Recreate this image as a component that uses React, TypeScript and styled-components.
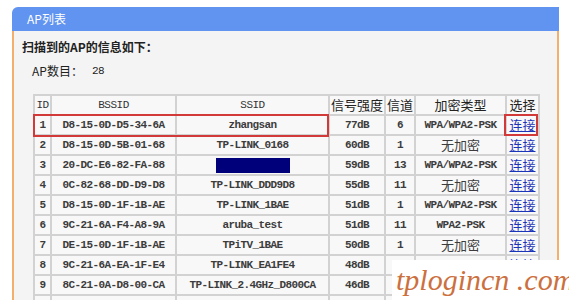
import React from 'react';
import styled, { createGlobalStyle } from 'styled-components';

const GlobalStyle = createGlobalStyle`
  html, body {
    margin: 0;
    padding: 0;
    background: #ffffff;
    overflow: hidden;
  }
`;

const Page = styled.div`
  position: relative;
  width: 569px;
  height: 300px;
  padding: 7px 0 0 12px;
  box-sizing: border-box;
  overflow: hidden;
  font-family: "Noto Sans CJK SC", "Liberation Sans", sans-serif;
`;

const Panel = styled.div`
  width: 547px;
  background: #f4f4f4;
  border-top-left-radius: 6px;
  overflow: hidden;
`;

const PanelHeader = styled.div`
  height: 24px;
  background: #6193f0;
  color: #ffffff;
  font-size: 12px;
  line-height: 24px;
  padding-left: 15px;
`;

const PanelBody = styled.div`
  border-left: 2px solid #f2b06c;
  border-right: 2px solid #f2b06c;
  padding: 8px 0 0 8px;
  height: 400px;
`;

const Intro = styled.div`
  font-size: 12px;
  font-weight: 700;
  color: #222;
  line-height: 16px;
`;

const CountLine = styled.div`
  display: flex;
  gap: 9px;
  margin: 8px 0 0 10px;
  font-size: 12px;
  color: #222;
  line-height: 16px;
`;

const CountValue = styled.span`
  font-family: "Liberation Mono", monospace;
  font-size: 11px;
  letter-spacing: -0.4px;
`;

const Table = styled.table`
  margin: 15px 0 0 11px;
  border-collapse: collapse;
  table-layout: fixed;
  width: 505px;
`;

// widths below include the cell's share of the 2px collapsed border
const HeadCell = styled.th<{ $w: number }>`
  width: ${p => p.$w - 2}px;
  height: 18px;
  padding: 0;
  border: 2px solid #d2d2d2;
  background: #f8f8f8;
  font-weight: 400;
  font-size: 13px;
  line-height: 16px;
  color: #222;
  text-align: center;
  white-space: nowrap;
  font-family: "Noto Sans CJK SC", "Liberation Sans", sans-serif;
`;

const MonoHead = styled(HeadCell)`
  font-family: "Liberation Mono", monospace;
  font-size: 11px;
  letter-spacing: -0.5px;
  color: #333;
`;

const Row = styled.tr`
  height: 18px;
`;

const Cell = styled.td<{ $cn?: boolean }>`
  padding: 0;
  height: 18px;
  border: 2px solid #d2d2d2;
  background: #f8f8f8;
  text-align: center;
  vertical-align: middle;
  white-space: nowrap;
  overflow: hidden;
  color: #3c3c3c;
  font-family: ${p => (p.$cn ? '"Noto Sans CJK SC", sans-serif' : '"Liberation Mono", monospace')};
  font-size: ${p => (p.$cn ? '13px' : '11px')};
  font-weight: ${p => (p.$cn ? 400 : 700)};
  letter-spacing: ${p => (p.$cn ? '0' : '-0.6px')};
  line-height: 16px;
`;

const Hidden = styled.span`
  display: inline-block;
  width: 74px;
  height: 15px;
  background: #00007a;
  vertical-align: middle;
`;

const Link = styled.a`
  color: #1b34b8;
  text-decoration: underline;
  font-family: "Noto Sans CJK SC", sans-serif;
  font-size: 13px;
  font-weight: 400;
  letter-spacing: 0;
  line-height: 16px;
  cursor: pointer;
`;

const RedFrame = styled.div<{ $left: number; $top: number; $w: number; $h: number }>`
  position: absolute;
  left: ${p => p.$left}px;
  top: ${p => p.$top}px;
  width: ${p => p.$w}px;
  height: ${p => p.$h}px;
  border: 2px solid #d23a3a;
  box-sizing: border-box;
  pointer-events: none;
`;

const Watermark = styled.div`
  position: absolute;
  left: 392px;
  top: 260px;
  width: 177px;
  height: 40px;
  background: #ffffff;
  color: #cc7040;
  font-family: "Liberation Serif", serif;
  font-style: italic;
  font-size: 30px;
  line-height: 40px;
  padding-left: 4px;
  box-sizing: border-box;
  white-space: nowrap;
`;

interface Ap {
  id: number;
  bssid: string;
  ssid: string | null;
  signal: string;
  channel: string;
  security: string;
}

const aps: Ap[] = [
  { id: 1, bssid: 'D8-15-0D-D5-34-6A', ssid: 'zhangsan', signal: '77dB', channel: '6', security: 'WPA/WPA2-PSK' },
  { id: 2, bssid: 'D8-15-0D-5B-01-68', ssid: 'TP-LINK_0168', signal: '60dB', channel: '1', security: '无加密' },
  { id: 3, bssid: '20-DC-E6-82-FA-88', ssid: null, signal: '59dB', channel: '13', security: 'WPA/WPA2-PSK' },
  { id: 4, bssid: '0C-82-68-DD-D9-D8', ssid: 'TP-LINK_DDD9D8', signal: '55dB', channel: '11', security: '无加密' },
  { id: 5, bssid: 'D8-15-0D-1F-1B-AE', ssid: 'TP-LINK_1BAE', signal: '51dB', channel: '1', security: 'WPA/WPA2-PSK' },
  { id: 6, bssid: '9C-21-6A-F4-A8-9A', ssid: 'aruba_test', signal: '51dB', channel: '11', security: 'WPA2-PSK' },
  { id: 7, bssid: 'DE-15-0D-1F-1B-AE', ssid: 'TPiTV_1BAE', signal: '50dB', channel: '1', security: '无加密' },
  { id: 8, bssid: '9C-21-6A-EA-1F-E4', ssid: 'TP-LINK_EA1FE4', signal: '48dB', channel: '1', security: 'WPA/WPA2-PSK' },
  { id: 9, bssid: '8C-21-0A-D8-00-CA', ssid: 'TP-LINK_2.4GHz_D800CA', signal: '46dB', channel: '6', security: 'WPA/WPA2-PSK' },
  { id: 10, bssid: '24-21-FB-18-22-18', ssid: 'Smart_100218', signal: '43dB', channel: '1', security: 'WPA/WPA2-PSK' },
];

const App = () => {
  return (
    <>
      <GlobalStyle />
      <Page>
        <Panel>
          <PanelHeader>AP列表</PanelHeader>
          <PanelBody>
            <Intro>扫描到的AP的信息如下：</Intro>
            <CountLine>
              <span>AP数目：</span>
              <CountValue>28</CountValue>
            </CountLine>
            <Table>
              <thead>
                <Row>
                  <MonoHead $w={17}>ID</MonoHead>
                  <MonoHead $w={125}>BSSID</MonoHead>
                  <MonoHead $w={153}>SSID</MonoHead>
                  <HeadCell $w={56}>信号强度</HeadCell>
                  <HeadCell $w={30}>信道</HeadCell>
                  <HeadCell $w={91}>加密类型</HeadCell>
                  <HeadCell $w={33}>选择</HeadCell>
                </Row>
              </thead>
              <tbody>
                {aps.map(ap => (
                  <Row key={ap.id}>
                    <Cell>{ap.id}</Cell>
                    <Cell>{ap.bssid}</Cell>
                    <Cell>{ap.ssid === null ? <Hidden /> : ap.ssid}</Cell>
                    <Cell>{ap.signal}</Cell>
                    <Cell>{ap.channel}</Cell>
                    <Cell $cn={ap.security === '无加密'}>{ap.security}</Cell>
                    <Cell $cn>
                      <Link>连接</Link>
                    </Cell>
                  </Row>
                ))}
              </tbody>
            </Table>
          </PanelBody>
        </Panel>
        <RedFrame $left={33} $top={114} $w={296} $h={23} />
        <RedFrame $left={504} $top={114} $w={34} $h={22} />
        <Watermark>tplogincn .com</Watermark>
      </Page>
    </>
  );
};

export default App;
